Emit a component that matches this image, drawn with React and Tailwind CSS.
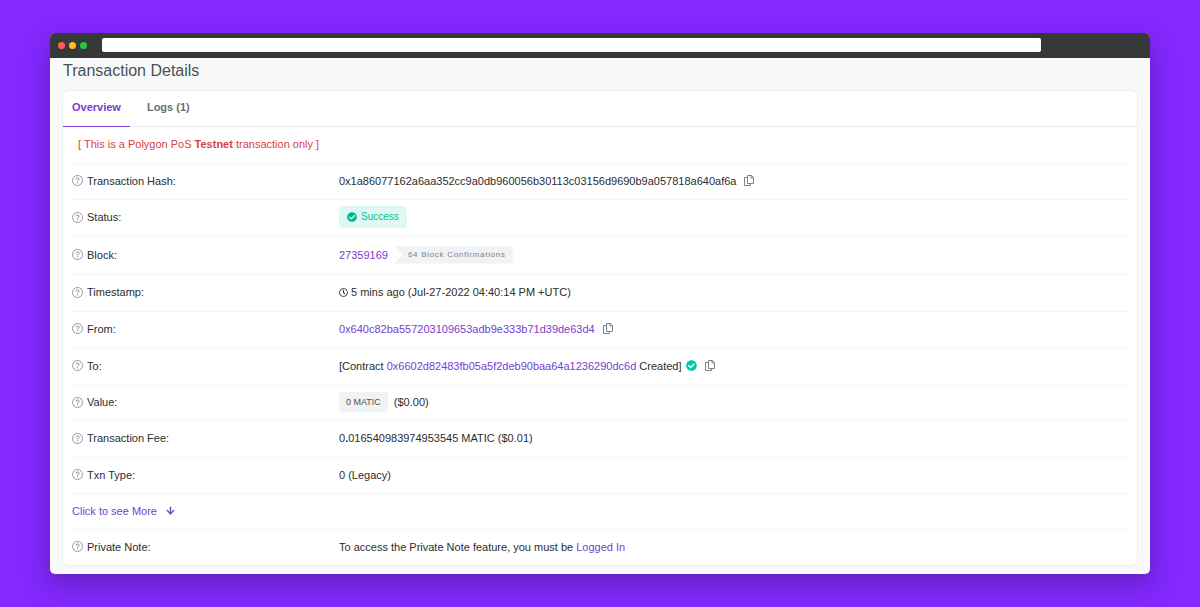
import React from 'react';
import { FaCheckCircle, FaRegClock } from 'react-icons/fa';
import { ArrowDown } from 'lucide-react';

function HelpIcon() {
  return (
    <svg viewBox="0 0 22 22" className="size-[11px] shrink-0 text-[#77838f]" fill="none" stroke="currentColor" strokeWidth="1.6" aria-hidden="true">
      <circle cx="11" cy="11" r="10" />
      <path d="M8 8.8C8 7 9.3 6 11 6s3 1 3 2.6c0 2-3 2.200-3 4.200" strokeWidth="2" />
      <path d="M11 14.800v2" strokeWidth="2" />
    </svg>
  );
}

function CopyButton({ label }) {
  return (
    <button type="button" aria-label={label} className="ml-1 text-[#77838f]">
      <svg viewBox="0 0 20 22" className="h-[11px] w-[10px]" fill="none" stroke="currentColor" strokeWidth="2" strokeLinejoin="round" aria-hidden="true">
        <path d="M7 1h8l4 4v12H7z" />
        <path d="M14 1v5h5" />
        <path d="M7 5H1v16h12v-4" />
      </svg>
    </button>
  );
}

function TextLink({ children }) {
  return <a href="#" className="text-[#7540d0]">{children}</a>;
}

function Row({ label, height = 'h-[36px]', children }) {
  return (
    <div className={`grid grid-cols-[1fr_3fr] items-center gap-1 border-t border-[#f4f5f7] pb-0.5 ${height}`}>
      <dt className="flex items-center gap-1">
        <HelpIcon />
        {label}:
      </dt>
      <dd className="flex items-center gap-1">{children}</dd>
    </div>
  );
}

export default function App() {
  return (
    <div className="min-h-screen bg-[#8428ff] px-[50px] py-[33px] font-['Liberation_Sans',Arial,sans-serif] text-[11px] leading-4 text-[#2b2d30]">
      <div className="overflow-hidden rounded-[5px] bg-[#f8f9fb] shadow-[0_10px_26px_rgba(40,20,90,0.4)]">
        <header className="flex h-[25px] items-center bg-[#373839] pb-px pl-2">
          <div className="flex w-11 gap-1">
            <span className="size-[7px] rounded-full bg-[#ff5f57]" />
            <span className="size-[7px] rounded-full bg-[#fdbc2e]" />
            <span className="size-[7px] rounded-full bg-[#28c840]" />
          </div>
          <input type="text" aria-label="Address" className="mr-[10%] h-[14px] min-w-0 flex-1 rounded-xs bg-white px-1 outline-none" />
        </header>

        <main className="px-3 pb-2">
          <h1 className="pt-[3px] pb-[9px] pl-px text-base leading-5 text-[#4a4f55]">Transaction Details</h1>

          <section className="rounded-lg border border-[#eceff3] bg-white">
            <nav className="flex h-[36px] border-b border-[#e9ecef] font-bold">
              <a href="#" className="-mb-px flex items-center border-b border-[#7540d0] px-[9px] pb-1 text-[#7540d0]">Overview</a>
              <a href="#" className="ml-2 flex items-center px-[9px] pb-1 text-[#6c6f74]">Logs (1)</a>
            </nav>

            <div className="px-[9px]">
              <p className="flex h-[36px] items-center pb-0.5 pl-1.5 text-[#db3d44]">
                <span>[ This is a Polygon PoS <strong>Testnet</strong> transaction only ]</span>
              </p>
              <dl>
                <Row label="Transaction Hash">
                  0x1a86077162a6aa352cc9a0db960056b30113c03156d9690b9a057818a640af6a
                  <CopyButton label="Copy transaction hash" />
                </Row>
                <Row label="Status" height="h-[37px]">
                  <span className="flex h-[22px] items-center gap-1 rounded bg-[#e0f8f3] px-2 text-[10px] text-[#02c197]">
                    <FaCheckCircle className="size-[10px] text-[#00b68d]" />
                    Success
                  </span>
                </Row>
                <Row label="Block" height="h-[38px]">
                  <TextLink>27359169</TextLink>
                  <span className="ml-0.5 flex h-[18px] items-center rounded-r-xs bg-[#f1f2f4] pr-[7px] pl-[14px] text-[8px] tracking-[0.7px] text-[#77838f] [clip-path:polygon(0_0,100%_0,100%_100%,0_100%,9px_50%)]">
                    64 Block Confirmations
                  </span>
                </Row>
                <Row label="Timestamp" height="h-[37px]">
                  <FaRegClock className="size-[9px]" />
                  <span className="-ml-px">5 mins ago (Jul-27-2022 04:40:14 PM +UTC)</span>
                </Row>
                <Row label="From">
                  <TextLink>0x640c82ba557203109653adb9e333b71d39de63d4</TextLink>
                  <CopyButton label="Copy sender address" />
                </Row>
                <Row label="To" height="h-[38px]">
                  <span>[Contract <TextLink>0x6602d82483fb05a5f2deb90baa64a1236290dc6d</TextLink> Created]</span>
                  <FaCheckCircle className="size-[11px] text-[#00c9a7]" />
                  <CopyButton label="Copy contract address" />
                </Row>
                <Row label="Value" height="h-[35px]">
                  <span className="mr-0.5 flex h-5 items-center rounded bg-[#f0f2f4] px-[7px] text-[9px] text-[#4a4f55]">0 MATIC</span>
                  ($0.00)
                </Row>
                <Row label="Transaction Fee" height="h-[37px]">
                  <span>0<b>.</b>016540983974953545 MATIC ($0.01)</span>
                </Row>
                <Row label="Txn Type">0 (Legacy)</Row>
              </dl>
              <div className="flex h-[36px] items-center border-t border-[#f4f5f7] pb-0.5">
                <button type="button" className="flex items-center gap-2 text-[#7540d0]">
                  Click to see More
                  <ArrowDown className="size-[11px]" strokeWidth={3} />
                </button>
              </div>
              <dl>
                <Row label="Private Note">
                  <span>To access the Private Note feature, you must be <TextLink>Logged In</TextLink></span>
                </Row>
              </dl>
            </div>
          </section>
        </main>
      </div>
    </div>
  );
}
